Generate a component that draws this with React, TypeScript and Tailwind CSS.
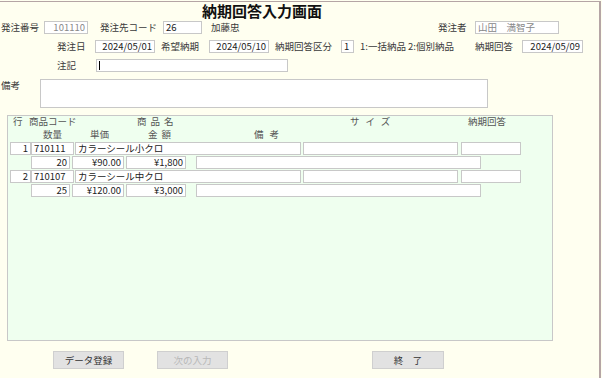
import React from "react";

type BoxProps = {
  className?: string;
  children?: React.ReactNode;
};

// looks like a legacy form field
function Field({ className = "", children }: BoxProps) {
  return (
    <div
      className={`h-[13px] shrink-0 overflow-hidden whitespace-nowrap border border-[#c8c8c8] bg-white px-[2px] text-[9.5px] leading-[11px] text-[#222] ${className}`}
    >
      {children}
    </div>
  );
}

function Label({ className = "", children }: BoxProps) {
  return (
    <div className={`shrink-0 whitespace-nowrap text-[9.5px] leading-[13px] text-[#3a3a3a] ${className}`}>
      {children}
    </div>
  );
}

function Btn({ className = "", children }: BoxProps) {
  return (
    <div
      className={`flex h-[18px] w-[71px] shrink-0 items-center justify-center border border-[#cfcfcf] bg-[#e2e2e2] text-[9.5px] ${className}`}
    >
      {children}
    </div>
  );
}

const rows = [
  { no: "1", code: "710111", name: "カラーシール小クロ", qty: "20", price: "¥90.00", amount: "¥1,800" },
  { no: "2", code: "710107", name: "カラーシール中クロ", qty: "25", price: "¥120.00", amount: "¥3,000" },
];

export default function App() {
  return (
    <div className="h-[378px] w-[602px] overflow-hidden bg-[#fffff0] font-['Noto_Sans_CJK_JP',sans-serif]">
      <div className="mt-[1px] h-[377px] w-[601px] border-t border-r-2 border-[#b5a5a5]">
        {/* title */}
        <div className="h-[19px] w-[524px] text-center text-[15px] font-bold leading-[17px] text-[#111]">
          納期回答入力画面
        </div>

        {/* row 1 */}
        <div className="flex h-[19px] items-start">
          <Label className="w-[44px] pl-[1px]">発注番号</Label>
          <Field className="w-[44px] bg-[#efefef] text-right text-[#888]">101110</Field>
          <Label className="ml-[12px] w-[63px]">発注先コード</Label>
          <Field className="w-[39px]">26</Field>
          <Label className="ml-[9px] w-[227px]">加藤忠</Label>
          <Label className="w-[37px]">発注者</Label>
          <Field className="w-[84px] text-[#888]">山田　満智子</Field>
        </div>

        {/* row 2 */}
        <div className="flex h-[19px] items-start">
          <Label className="ml-[57px] w-[38px]">発注日</Label>
          <Field className="w-[60px] text-right">2024/05/01</Field>
          <Label className="ml-[6px] w-[48px]">希望納期</Label>
          <Field className="w-[60px] text-right">2024/05/10</Field>
          <Label className="ml-[6px] w-[66px]">納期回答区分</Label>
          <Field className="w-[13px] px-[1px]">1</Field>
          <Label className="ml-[6px] w-[115px]">1:一括納品 2:個別納品</Label>
          <Label className="w-[47px]">納期回答</Label>
          <Field className="w-[61px] text-right">2024/05/09</Field>
        </div>

        {/* row 3 */}
        <div className="flex h-[20px] items-start">
          <Label className="ml-[57px] w-[39px]">注記</Label>
          <Field className="flex w-[192px] items-center">
            <div className="h-[9px] w-[1px] bg-black" />
          </Field>
        </div>

        {/* remarks */}
        <div className="flex items-start">
          <Label className="w-[40px] pl-[1px]">備考</Label>
          <div className="h-[29px] w-[448px] border border-[#c8c8c8] bg-white" />
        </div>

        {/* detail panel */}
        <div className="ml-[7px] mt-[7px] h-[226px] w-[546px] border border-[#c8c8c8] bg-[#efffef]">
          <div className="flex h-[11px] items-start text-[9.5px] leading-[10px] text-[#555]">
            <div className="ml-[5px] w-[16px]">行</div>
            <div className="w-[108px]">商品コード</div>
            <div className="w-[213px] tracking-[4px]">商品名</div>
            <div className="w-[118px] tracking-[6px]">サイズ</div>
            <div>納期回答</div>
          </div>
          <div className="flex h-[14px] items-center text-[9.5px] leading-[10px] text-[#555]">
            <div className="ml-[35px] w-[47px]">数量</div>
            <div className="w-[58px]">単価</div>
            <div className="w-[106px] tracking-[4px]">金額</div>
            <div className="tracking-[6px]">備考</div>
          </div>
          <div className="mt-[1px] flex flex-col gap-[1px]">
            {rows.map((r) => (
              <React.Fragment key={r.no}>
                <div className="flex">
                  <Field className="ml-[2px] w-[21px] text-right">{r.no}</Field>
                  <Field className="w-[43px] px-[1px]">{r.code}</Field>
                  <Field className="ml-[1px] w-[226px]">{r.name}</Field>
                  <Field className="ml-[2px] w-[155px]" />
                  <Field className="ml-[3px] w-[60px]" />
                </div>
                <div className="flex">
                  <Field className="ml-[23px] w-[39px] text-right">{r.qty}</Field>
                  <Field className="ml-[2px] w-[52px] text-right">{r.price}</Field>
                  <Field className="ml-[2px] w-[60px] text-right">{r.amount}</Field>
                  <Field className="ml-[10px] w-[285px]" />
                </div>
              </React.Fragment>
            ))}
          </div>
        </div>

        {/* buttons */}
        <div className="mt-[10px] flex">
          <Btn className="ml-[53px] text-[#333]">データ登録</Btn>
          <Btn className="ml-[33px] text-[#b8b8b8]">次の入力</Btn>
          <Btn className="ml-[144px] w-[72px] text-[#333]">終　了</Btn>
        </div>
      </div>
    </div>
  );
}
